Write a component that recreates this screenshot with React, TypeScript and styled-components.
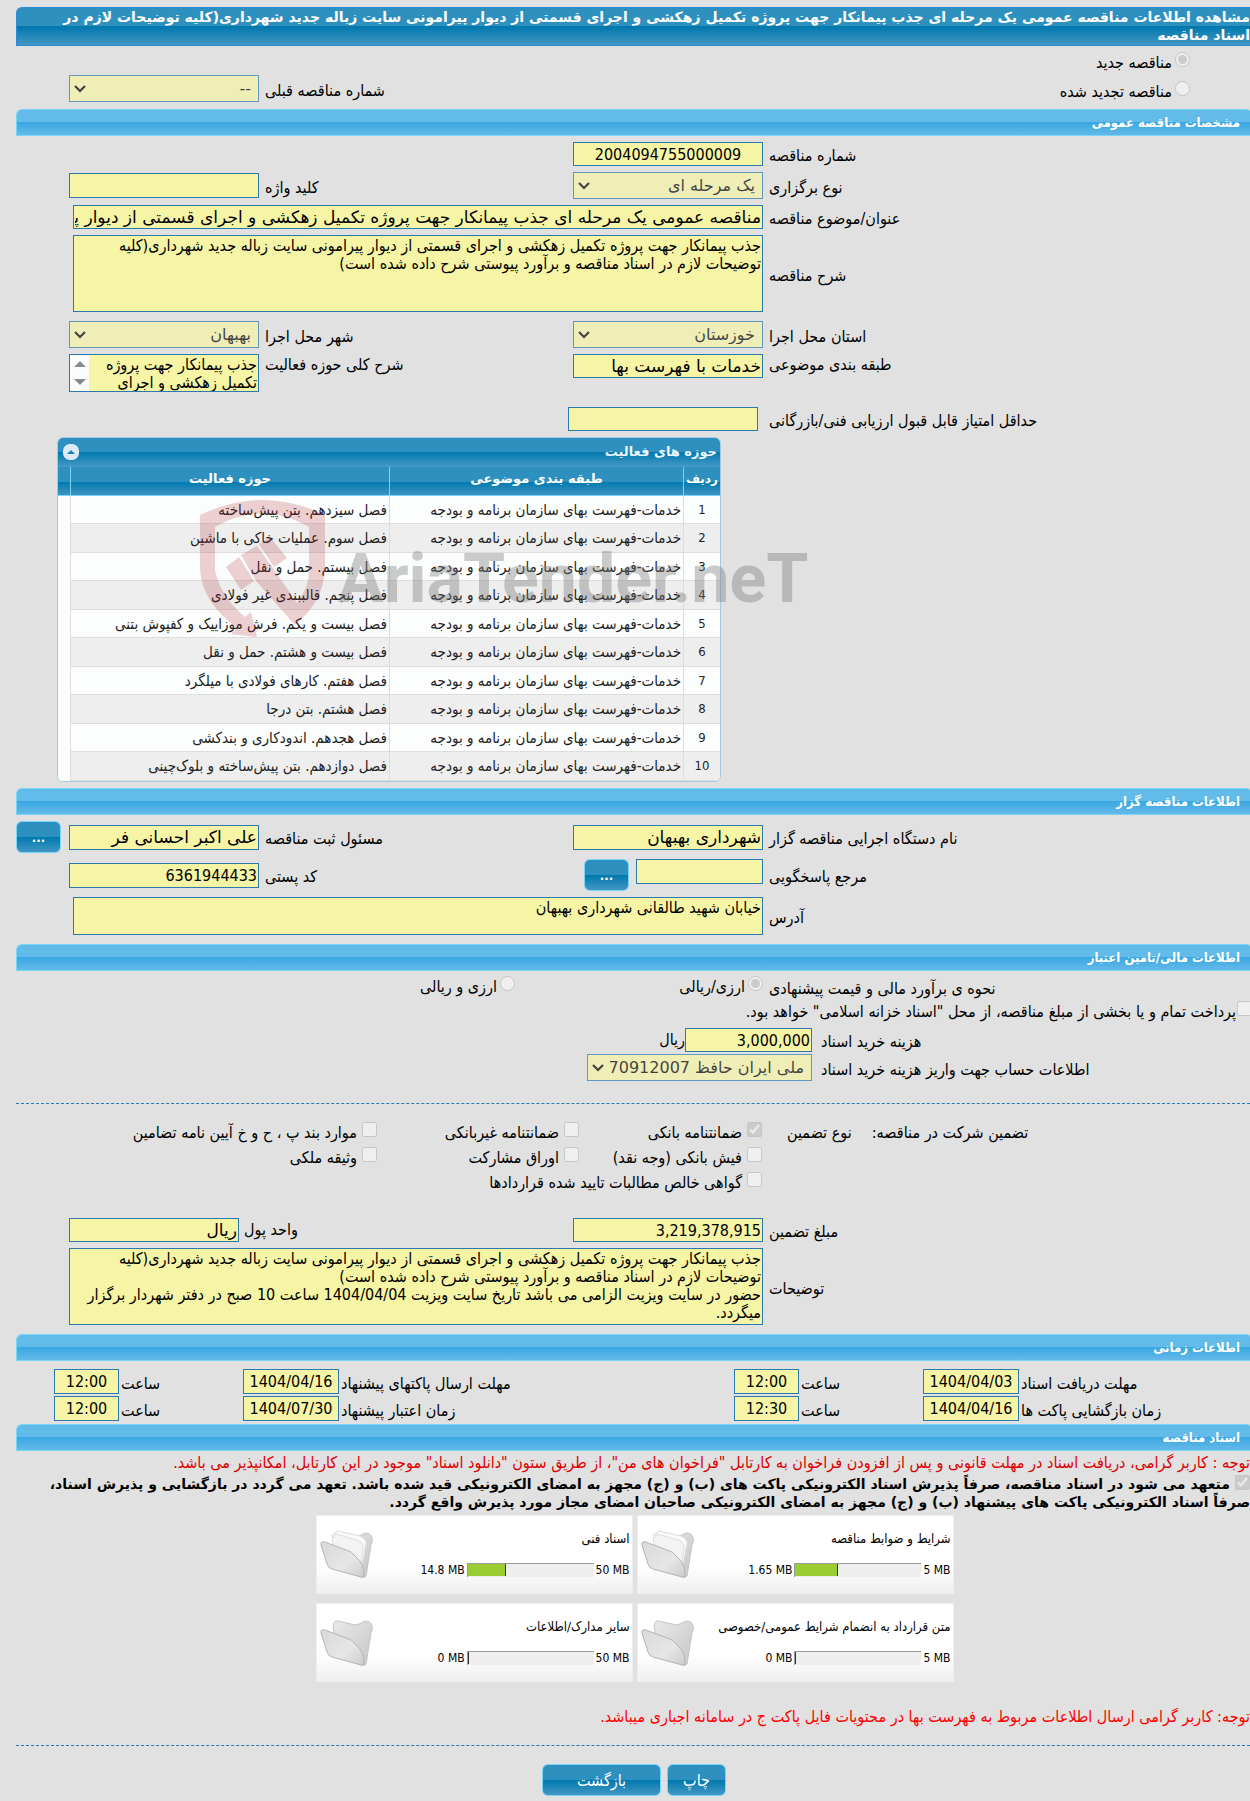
import React from 'react';
import styled, { createGlobalStyle, css } from 'styled-components';

const wideFont = '"DejaVu Sans", Tahoma, sans-serif';

const GlobalStyle = createGlobalStyle`
  * { box-sizing: border-box; }
  body {
    margin: 0;
    background: #e1e1e1;
    color: #000;
    font-family: "DejaVu Sans Condensed", "DejaVu Sans", Tahoma, sans-serif;
    font-size: 16px;
    line-height: 18px;
  }
`;

const blueFill = css`
  background: linear-gradient(#2e90be 0 50%, #0078ae 50%, #4297c2 100%);
`;

const Page = styled.main`
  direction: rtl;
  padding: 7px 0 5px 16px;
  overflow-x: hidden;
`;

const PageTitle = styled.h1`
  ${blueFill}
  margin: 0;
  border: 1px solid #298cda;
  border-width: 1px 0 1px 1px;
  border-radius: 6px 0 0 0;
  color: #fff;
  font-family: ${wideFont};
  font-size: 14px;
  line-height: 18px;
  padding: 0 0 0 20px;
  min-height: 39px;
`;

const SectionTitle = styled.h2<{ $top: number }>`
  margin: ${(p) => p.$top}px 0 0;
  height: 27px;
  padding: 0 10px;
  border: 1px solid #77d5f7;
  border-width: 1px 0 1px 1px;
  border-radius: 6px 3px 0 0;
  background: linear-gradient(#62bbe8 0 48%, #3aa8e2 50%, #64b9e8 100%);
  color: #fff;
  font-size: 13px;
  line-height: 26px;
`;

const Label = styled.label`
  padding-top: 3px;
  text-align: left;
  white-space: nowrap;
  line-height: 21px;
`;

const Row = styled.div<{ $top: number; $height: number; $align?: string }>`
  display: grid;
  grid-template-columns: 481fr 190px 302fr 190px 47px;
  column-gap: 6px;
  align-items: ${(p) => p.$align || 'center'};
  margin-top: ${(p) => p.$top}px;
  min-height: ${(p) => p.$height}px;
  ${(p) => p.$align === 'start' && css`
    & > ${Label} { padding-top: 0; }
  `}
`;

const CostRow = styled(Row)`
  grid-template-columns: 429fr 225px 562fr;
  column-gap: 9px;
`;

const TimeRow = styled(Row)`
  grid-template-columns: 229fr 96px 120fr 65px 391fr 96px 120fr 65px 36px;
  column-gap: 2px;
`;

const field = css`
  border: 1px solid #2a7ab0;
  border-radius: 0;
  background: #f6f4a5;
  color: #000;
  margin: 0;
`;

const TextBox = styled.input<{ $tall?: boolean; $center?: boolean; $shift?: boolean; $digits?: boolean }>`
  ${field}
  display: block;
  width: 100%;
  min-width: 0;
  height: ${(p) => (p.$tall ? 25 : 24)}px;
  padding: 0 1px;
  font-family: ${(p) => (p.$digits ? 'inherit' : wideFont)};
  font-size: ${(p) => (p.$digits ? 16 : 17)}px;
  text-align: ${(p) => (p.$center ? 'center' : 'right')};
  ${(p) => p.$shift && 'margin-right: 5px;'}
`;

const WideBox = styled(TextBox)`
  grid-column: 2 / 5;
  width: auto;
  margin-left: 4px;
`;

const Area = styled.textarea<{ $height: number; $scroll?: boolean }>`
  ${field}
  display: block;
  width: 100%;
  height: ${(p) => p.$height}px;
  padding: 1px;
  font-family: inherit;
  font-size: 16px;
  line-height: 18px;
  resize: none;
  overflow-y: ${(p) => (p.$scroll ? 'scroll' : 'hidden')};
`;

const WideArea = styled(Area)<{ $flush?: boolean }>`
  grid-column: 2 / 5;
  width: auto;
  margin-left: ${(p) => (p.$flush ? 0 : 4)}px;
`;

const ActivityBox = styled.div`
  position: relative;
`;

const ScrollTrack = styled.span`
  position: absolute;
  left: 1px;
  top: 1px;
  bottom: 1px;
  width: 19px;
  display: flex;
  flex-direction: column;
  justify-content: space-between;
  align-items: center;
  padding: 6px 0;
  background: #fcfcfc;
`;

const DropFrame = styled.div`
  position: relative;
  opacity: 0.7;
`;

const Chevron = styled.svg`
  position: absolute;
  left: 5px;
  top: 10px;
  pointer-events: none;
`;

const DropList = styled.select`
  ${field}
  appearance: none;
  display: block;
  width: 100%;
  height: 27px;
  padding: 0 7px 0 22px;
  font-family: ${wideFont};
  font-size: 16px;
  &:disabled { color: #000; opacity: 1; }
`;

const BlueButton = styled.button<{ $width: number }>`
  ${blueFill}
  width: ${(p) => p.$width}px;
  height: 32px;
  flex: none;
  padding: 0;
  border: 1px solid #77d5f7;
  border-radius: 6px;
  color: #fff;
  font-family: inherit;
  font-size: 16px;
`;

const DotsButton = styled(BlueButton)`
  font-size: 13px;
  font-weight: bold;
  justify-self: end;
`;

const Choice = styled.label<{ $gap?: number }>`
  display: inline-flex;
  align-items: flex-start;
  gap: ${(p) => p.$gap ?? 3}px;
  white-space: nowrap;
  line-height: 22px;
`;

const Mark = styled.input`
  width: 15px;
  height: 15px;
  margin: 0;
  flex: none;
`;

const StatusChoice = styled(Choice)`
  grid-column: 1 / 3;
  padding: 6px 60px 0 0;
`;

const ContactCell = styled.div`
  display: flex;
  gap: 7px;
  align-items: flex-start;
`;

const ShortBox = styled(TextBox)`
  width: 127px;
`;

const CurrencyCell = styled.div`
  display: flex;
  grid-column: 2 / 4;
  align-items: center;
`;

const UnitBox = styled(TextBox)`
  width: 170px;
`;

const UnitLabel = styled.label`
  grid-column: 3 / 5;
  display: flex;
  gap: 5px;
  align-items: center;
  justify-content: flex-end;
  white-space: nowrap;
`;

const MethodChoices = styled.div`
  grid-column: 2 / 6;
  display: flex;
`;

const MethodSlot = styled.div`
  width: 248px;
`;

const TreasuryLine = styled.div`
  height: 25px;
  margin: 1px -2px 0 0;
`;

const Dashes = styled.hr<{ $top: number }>`
  margin: ${(p) => p.$top}px 0 0;
  border: 0;
  border-top: 1px dashed #2a7ab0;
`;

const Guarantees = styled.div`
  display: grid;
  grid-template-columns: 488fr 183px 202px 361fr;
  grid-auto-rows: 25px;
  margin-top: 18px;
`;

const GuaranteeHead = styled.div`
  display: flex;
  justify-content: flex-end;
  gap: 20px;
  padding-left: 25px;
  line-height: 22px;
`;

const WideChoice = styled(Choice)`
  grid-column: 2 / 5;
`;

const SecondLine = styled(Choice)`
  grid-column-start: 2;
`;

/* activity table */
const ActivityBlock = styled.div`
  position: relative;
  margin-top: 6px;
  padding-left: 41px;
`;

const Panel = styled.div`
  width: 664px;
  margin-right: auto;
  border: 1px solid #a6c9e2;
  border-radius: 6px;
  background: #fcfdfd;
  overflow: hidden;
`;

const PanelHead = styled.div`
  ${blueFill}
  display: flex;
  align-items: center;
  justify-content: space-between;
  height: 29px;
  padding: 0 3px 0 5px;
  border-bottom: 1px solid #4297d7;
  color: #e8f6ff;
  font-family: ${wideFont};
  font-size: 13px;
  font-weight: bold;
`;

const FoldButton = styled.button`
  width: 16px;
  height: 16px;
  padding: 0;
  border: 0;
  border-radius: 7px;
  background: #dfeaf8;
  display: flex;
  align-items: center;
  justify-content: center;
`;

const Activities = styled.table`
  width: 100%;
  border-collapse: separate;
  border-spacing: 0;
  table-layout: fixed;
  color: #222;
  font-size: 15px;
  thead tr { ${blueFill} }
  th {
    height: 29px;
    padding: 0 0 4px;
    color: #fff;
    font-family: ${wideFont};
    font-size: 13px;
    border-bottom: 1px solid #77d5f7;
    border-left: 1px solid #77d5f7;
  }
  th:first-child { font-size: 12px; }
  th:last-child { border-left: 0; }
  td {
    height: 28px;
    padding: 0 2px;
    border-bottom: 1px solid #ddd;
    border-left: 1px solid #ddd;
    white-space: nowrap;
    overflow: hidden;
  }
  tbody tr:nth-child(even) td { height: 29px; background: #eee; }
  td:first-child { text-align: center; font-size: 13px; }
  tbody tr td:last-child { border: 0; background: #fcfdfd; }
`;

const Watermark = styled.svg`
  position: absolute;
  left: 174px;
  top: 53px;
  pointer-events: none;
`;

/* documents */
const Notice = styled.p<{ $top: number; $bright?: boolean }>`
  margin: ${(p) => p.$top}px 0 0;
  color: ${(p) => (p.$bright ? '#ff0000' : '#dd0000')};
  line-height: 22px;
`;

const Pledge = styled.label`
  display: block;
  margin-top: 1px;
  font-family: ${wideFont};
  font-size: 14px;
  font-weight: bold;
  line-height: 18px;
`;

const PledgeMark = styled(Mark)`
  margin-left: 5px;
  vertical-align: -1px;
`;

const Cards = styled.div`
  display: grid;
  grid-template-columns: 317px 317px;
  justify-content: center;
  gap: 9px 4px;
  margin-top: 4px;
  padding-left: 3px;
`;

const Card = styled.section`
  display: flex;
  align-items: center;
  justify-content: space-between;
  height: 79px;
  padding: 0 2px;
  border: 1px solid #eee;
  background: linear-gradient(#fff 0 65%, #efefef 100%);
`;

const CardBody = styled.div`
  display: flex;
  flex-direction: column;
  height: 62px;
`;

const CardName = styled.h3`
  margin: 0;
  font-size: 13px;
  font-weight: normal;
  line-height: 30px;
  white-space: nowrap;
`;

const Quota = styled.div`
  display: flex;
  align-items: center;
  gap: 2px;
  height: 32px;
  font-size: 12px;
  line-height: 14px;
`;

const Amount = styled.span`
  direction: ltr;
  white-space: nowrap;
`;

const Gauge = styled.div`
  width: 127px;
  height: 14px;
  direction: ltr;
  border: 1px solid #999;
  border-width: 1px 0 0 1px;
  background: #eee;
`;

const GaugeFill = styled.div`
  height: 12px;
  border-right: 1px solid #333;
  background: #9acd32;
`;

const Actions = styled.div`
  display: flex;
  justify-content: center;
  gap: 6px;
  margin-top: 18px;
  padding-left: 2px;
`;

const subject = 'خدمات-فهرست بهای سازمان برنامه و بودجه';
const activities = [
  'فصل سیزدهم. بتن پیش‌ساخته',
  'فصل سوم. عملیات خاکی با ماشین',
  'فصل بیستم. حمل و نقل',
  'فصل پنجم. قالببندی غیر فولادی',
  'فصل بیست و یکم. فرش موزاییک و کفپوش بتنی',
  'فصل بیست و هشتم. حمل و نقل',
  'فصل هفتم. کارهای فولادی با میلگرد',
  'فصل هشتم. بتن درجا',
  'فصل هجدهم. اندودکاری و بندکشی',
  'فصل دوازدهم. بتن پیش‌ساخته و بلوک‌چینی',
];

const summary =
  'جذب پیمانکار جهت پروژه تکمیل زهکشی و اجرای قسمتی از دیوار پیرامونی سایت زباله جدید شهرداری(کلیه\nتوضیحات لازم در اسناد مناقصه و برآورد پیوستی شرح داده شده است)';

const documents = [
  { name: 'شرایط و ضوابط مناقصه', used: 1.65, max: 5 },
  { name: 'اسناد فنی', used: 14.8, max: 50 },
  { name: 'متن قرارداد به انضمام شرایط عمومی/خصوصی', used: 0, max: 5 },
  { name: 'سایر مدارک/اطلاعات', used: 0, max: 50 },
];

function Folder({ full }: { full: boolean }) {
  return (
    <svg width="56" height="50" viewBox="0 0 56 50" aria-hidden="true">
      <defs>
        <linearGradient id="back" x1="0" y1="0" x2="1" y2="1">
          <stop offset="0" stopColor="#e9e9e9" />
          <stop offset="1" stopColor="#c6c6c6" />
        </linearGradient>
        <linearGradient id="front" x1="0" y1="0" x2="1" y2="1">
          <stop offset="0" stopColor="#d9d9d9" />
          <stop offset="0.6" stopColor="#e6e6e6" />
          <stop offset="1" stopColor="#cccccc" />
        </linearGradient>
      </defs>
      <path d="M14 8 Q15 2 19 3 L32 6 Q36 8 40 6 L46 3 Q52 3 53 8 Q54 12 52 15 L47 46 Q46 48 43 47 L20 39Z" fill="url(#back)" stroke="#c4c4c4" />
      {full && (
        <g stroke="#ddd" fill="#fafafa">
          <path d="M13 5 L19 1 L41 6 Q48 9 47 14 L42 41 L18 34Z" />
          <path d="M13 9 L17 4 L38 10 Q45 12 44 19 L41 42 L18 34Z" fill="#f3f3f3" />
        </g>
      )}
      <path d="M2 15 Q1 11 6 12 L27 20 Q33 21 37 27 Q45 33 45 45 Q45 48 42 47 L13 39 Q9 38 8 34Z" fill="url(#front)" stroke="#b4b4b4" />
    </svg>
  );
}

function Drop({ id, value }: { id: string; value: string }) {
  return (
    <DropFrame>
      <DropList id={id} disabled><option>{value}</option></DropList>
      <Chevron width="12" height="8" aria-hidden="true">
        <path d="M1 1 L6 6 L11 1" fill="none" stroke="#000" strokeWidth="2.2" />
      </Chevron>
    </DropFrame>
  );
}

function Check({ text, gap = 5, on, as: Wrap = Choice }: { text: string; gap?: number; on?: boolean; as?: any }) {
  return (
    <Wrap $gap={gap}>
      <Mark type="checkbox" disabled defaultChecked={on} />
      {text}
    </Wrap>
  );
}

function TimePair({ id, label, date, time }: { id: string; label: string; date: string; time: string }) {
  return (
    <>
      <Label htmlFor={id}>{label}</Label>
      <TextBox id={id} $tall $center $digits readOnly value={date} />
      <Label htmlFor={id + '-hour'}>ساعت</Label>
      <TextBox id={id + '-hour'} $tall $center $digits readOnly value={time} />
    </>
  );
}

export default function App() {
  return (
    <>
      <GlobalStyle />
      <Page>
        <PageTitle>
          مشاهده اطلاعات مناقصه عمومی یک مرحله ای جذب پیمانکار جهت پروژه تکمیل زهکشی و اجرای قسمتی از دیوار پیرامونی سایت زباله جدید شهرداری(کلیه توضیحات لازم در اسناد مناقصه
        </PageTitle>
        <Row $top={0} $height={28}>
          <StatusChoice>
            <Mark type="radio" name="status" disabled defaultChecked />
            مناقصه جدید
          </StatusChoice>
        </Row>
        <Row $top={0} $height={29}>
          <StatusChoice>
            <Mark type="radio" name="status" disabled />
            مناقصه تجدید شده
          </StatusChoice>
          <Label htmlFor="previous">شماره مناقصه قبلی</Label>
          <Drop id="previous" value="--" />
        </Row>

        <SectionTitle $top={6}>مشخصات مناقصه عمومی</SectionTitle>
        <Row $top={6} $height={24}>
          <Label htmlFor="number">شماره مناقصه</Label>
          <TextBox id="number" $center $digits readOnly value="2004094755000009" />
        </Row>
        <Row $top={6} $height={27}>
          <Label htmlFor="kind">نوع برگزاری</Label>
          <Drop id="kind" value="یک مرحله ای" />
          <Label htmlFor="keyword">کلید واژه</Label>
          <TextBox id="keyword" $tall readOnly value="" />
        </Row>
        <Row $top={6} $height={24}>
          <Label htmlFor="title">عنوان/موضوع مناقصه</Label>
          <WideBox id="title" readOnly value="مناقصه عمومی یک مرحله ای جذب پیمانکار جهت پروژه تکمیل زهکشی و اجرای قسمتی از دیوار پیرامونی سایت زباله جدید شهرداری" />
        </Row>
        <Row $top={6} $height={77}>
          <Label htmlFor="summary">شرح مناقصه</Label>
          <WideArea id="summary" $height={77} readOnly value={summary} />
        </Row>
        <Row $top={9} $height={27}>
          <Label htmlFor="province">استان محل اجرا</Label>
          <Drop id="province" value="خوزستان" />
          <Label htmlFor="city">شهر محل اجرا</Label>
          <Drop id="city" value="بهبهان" />
        </Row>
        <Row $top={6} $height={38} $align="start">
          <Label htmlFor="class">طبقه بندی موضوعی</Label>
          <TextBox id="class" readOnly value="خدمات با فهرست بها" />
          <Label htmlFor="scope">شرح کلی حوزه فعالیت</Label>
          <ActivityBox>
            <Area id="scope" $height={38} $scroll readOnly value={'جذب پیمانکار جهت پروژه\nتکمیل زهکشی و اجرای'} />
            <ScrollTrack aria-hidden="true">
              <svg width="12" height="6"><path d="M0 6 L6 0 L12 6Z" fill="#8b8b8b" /></svg>
              <svg width="12" height="6"><path d="M0 0 L6 6 L12 0Z" fill="#8b8b8b" /></svg>
            </ScrollTrack>
          </ActivityBox>
        </Row>
        <Row $top={15} $height={24}>
          <Label htmlFor="minimum">حداقل امتیاز قابل قبول ارزیابی فنی/بازرگانی</Label>
          <TextBox id="minimum" $shift readOnly value="" />
        </Row>

        <ActivityBlock>
          <Panel>
            <PanelHead>
              <span>حوزه های فعالیت</span>
              <FoldButton aria-label="بستن">
                <svg width="8" height="4"><path d="M0 4 L4 0 L8 4Z" fill="#1f7fb0" /></svg>
              </FoldButton>
            </PanelHead>
            <Activities>
              <colgroup>
                <col style={{ width: 37 }} />
                <col style={{ width: 294 }} />
                <col />
                <col style={{ width: 12 }} />
              </colgroup>
              <thead>
                <tr><th>ردیف</th><th>طبقه بندی موضوعی</th><th>حوزه فعالیت</th><th /></tr>
              </thead>
              <tbody>
                {activities.map((name, i) => (
                  <tr key={name}><td>{i + 1}</td><td>{subject}</td><td>{name}</td><td /></tr>
                ))}
              </tbody>
            </Activities>
          </Panel>
          <Watermark width="640" height="160" viewBox="0 0 640 160" direction="ltr">
            <path
              fill="#b0282e"
              fillOpacity="0.21"
              d="M10 25 Q72 -5 135 25 L135 80 Q133 112 105 135 L66 91 L51 65 L67 56 L83 78 L107 113 Q119 98 119 80 L119 37 Q72 10 25 37 L25 80 Q30 106 55 127 L61 122 L67 147 L41 144 L47 138 Q12 112 10 80Z M36 77 L49 67 L64 91 L51 100Z M69 54 L80 47 L97 68 L84 77Z"
            />
            <text x="148" y="112" fill="#777" fillOpacity="0.38" fontFamily="Roboto, sans-serif" fontWeight="bold" fontSize="68">AriaTender.neT</text>
          </Watermark>
        </ActivityBlock>

        <SectionTitle $top={6}>اطلاعات مناقصه گزار</SectionTitle>
        <Row $top={6} $height={32}>
          <Label htmlFor="agency">نام دستگاه اجرایی مناقصه گزار</Label>
          <TextBox id="agency" $tall readOnly value="شهرداری بهبهان" />
          <Label htmlFor="officer">مسئول ثبت مناقصه</Label>
          <TextBox id="officer" $tall readOnly value="علی اکبر احسانی فر" />
          <DotsButton $width={45}>...</DotsButton>
        </Row>
        <Row $top={6} $height={32}>
          <Label htmlFor="contact">مرجع پاسخگویی</Label>
          <ContactCell>
            <ShortBox id="contact" $tall readOnly value="" />
            <DotsButton $width={45}>...</DotsButton>
          </ContactCell>
          <Label htmlFor="postal">کد پستی</Label>
          <TextBox id="postal" $tall $digits readOnly value="6361944433" />
        </Row>
        <Row $top={6} $height={38}>
          <Label htmlFor="address">آدرس</Label>
          <WideArea id="address" $height={38} readOnly value="خیابان شهید طالقانی شهرداری بهبهان" />
        </Row>

        <SectionTitle $top={9}>اطلاعات مالی/تامین اعتبار</SectionTitle>
        <Row $top={3} $height={26}>
          <Label as="span">نحوه ی برآورد مالی و قیمت پیشنهادی</Label>
          <MethodChoices>
            <MethodSlot>
              <Choice><Mark type="radio" name="method" disabled defaultChecked />ارزی/ریالی</Choice>
            </MethodSlot>
            <Choice><Mark type="radio" name="method" disabled />ارزی و ریالی</Choice>
          </MethodChoices>
        </Row>
        <TreasuryLine>
          <Check gap={1} text={'پرداخت تمام و یا بخشی از مبلغ مناقصه، از محل "اسناد خزانه اسلامی" خواهد بود.'} />
        </TreasuryLine>
        <CostRow $top={2} $height={24}>
          <Label htmlFor="cost">هزینه خرید اسناد</Label>
          <CurrencyCell>
            <ShortBox id="cost" $digits readOnly value="3,000,000" />
            <span>ریال</span>
          </CurrencyCell>
        </CostRow>
        <CostRow $top={2} $height={27}>
          <Label htmlFor="account">اطلاعات حساب جهت واریز هزینه خرید اسناد</Label>
          <Drop id="account" value="ملی ایران حافظ 0106270912007" />
        </CostRow>

        <Dashes $top={22} />
        <Guarantees>
          <GuaranteeHead>
            <span>تضمین شرکت در مناقصه:</span>
            <span>نوع تضمین</span>
          </GuaranteeHead>
          <Check text="ضمانتنامه بانکی" on />
          <Check text="ضمانتنامه غیربانکی" />
          <Check text="موارد بند پ ، ح و خ آیین نامه تضامین" />
          <Check text="فیش بانکی (وجه نقد)" as={SecondLine} />
          <Check text="اوراق مشارکت" />
          <Check text="وثیقه ملکی" />
          <Check text="گواهی خالص مطالبات تایید شده قراردادها" as={WideChoice} />
        </Guarantees>

        <Row $top={21} $height={24}>
          <Label htmlFor="amount">مبلغ تضمین</Label>
          <TextBox id="amount" $digits readOnly value="3,219,378,915" />
          <UnitLabel>
            واحد پول
            <UnitBox readOnly value="ریال" />
          </UnitLabel>
        </Row>
        <Row $top={6} $height={77}>
          <Label htmlFor="notes">توضیحات</Label>
          <WideArea
            id="notes"
            $height={77}
            $flush
            readOnly
            value={summary + '\nحضور در سایت ویزیت الزامی می باشد تاریخ سایت ویزیت 1404/04/04 ساعت 10 صبح در دفتر شهردار برگزار\nمیگردد.'}
          />
        </Row>

        <SectionTitle $top={9}>اطلاعات زمانی</SectionTitle>
        <TimeRow $top={8} $height={25}>
          <TimePair id="receive" label="مهلت دریافت اسناد" date="1404/04/03" time="12:00" />
          <TimePair id="submit" label="مهلت ارسال پاکتهای پیشنهاد" date="1404/04/16" time="12:00" />
        </TimeRow>
        <TimeRow $top={2} $height={24}>
          <TimePair id="open" label="زمان بازگشایی پاکت ها" date="1404/04/16" time="12:30" />
          <TimePair id="valid" label="زمان اعتبار پیشنهاد" date="1404/07/30" time="12:00" />
        </TimeRow>

        <SectionTitle $top={3}>اسناد مناقصه</SectionTitle>
        <Notice $top={1}>
          توجه : کاربر گرامی، دریافت اسناد در مهلت قانونی و پس از افزودن فراخوان به کارتابل "فراخوان های من"، از طریق ستون "دانلود اسناد" موجود در این کارتابل، امکانپذیر می باشد.
        </Notice>
        <Pledge>
          <PledgeMark type="checkbox" disabled defaultChecked />
          متعهد می شود در اسناد مناقصه، صرفاً پذیرش اسناد الکترونیکی پاکت های (ب) و (ج) مجهز به امضای الکترونیکی قید شده باشد. تعهد می گردد در بازگشایی و پذیرش اسناد،
          <br />
          صرفاً اسناد الکترونیکی پاکت های پیشنهاد (ب) و (ج) مجهز به امضای الکترونیکی صاحبان امضای مجاز مورد پذیرش واقع گردد.
        </Pledge>

        <Cards>
          {documents.map((doc) => (
            <Card key={doc.name}>
              <CardBody>
                <CardName>{doc.name}</CardName>
                <Quota>
                  <Amount>{doc.max} MB</Amount>
                  <Gauge>
                    <GaugeFill style={{ width: `calc(${(doc.used / doc.max) * 100}% + 1px)` }} />
                  </Gauge>
                  <Amount>{doc.used} MB</Amount>
                </Quota>
              </CardBody>
              <Folder full={doc.used > 0} />
            </Card>
          ))}
        </Cards>

        <Notice $top={24} $bright>
          توجه: کاربر گرامی ارسال اطلاعات مربوط به فهرست بها در محتویات فایل پاکت ج در سامانه اجباری میباشد.
        </Notice>
        <Dashes $top={17} />
        <Actions>
          <BlueButton $width={59}>چاپ</BlueButton>
          <BlueButton $width={119}>بازگشت</BlueButton>
        </Actions>
      </Page>
    </>
  );
}
